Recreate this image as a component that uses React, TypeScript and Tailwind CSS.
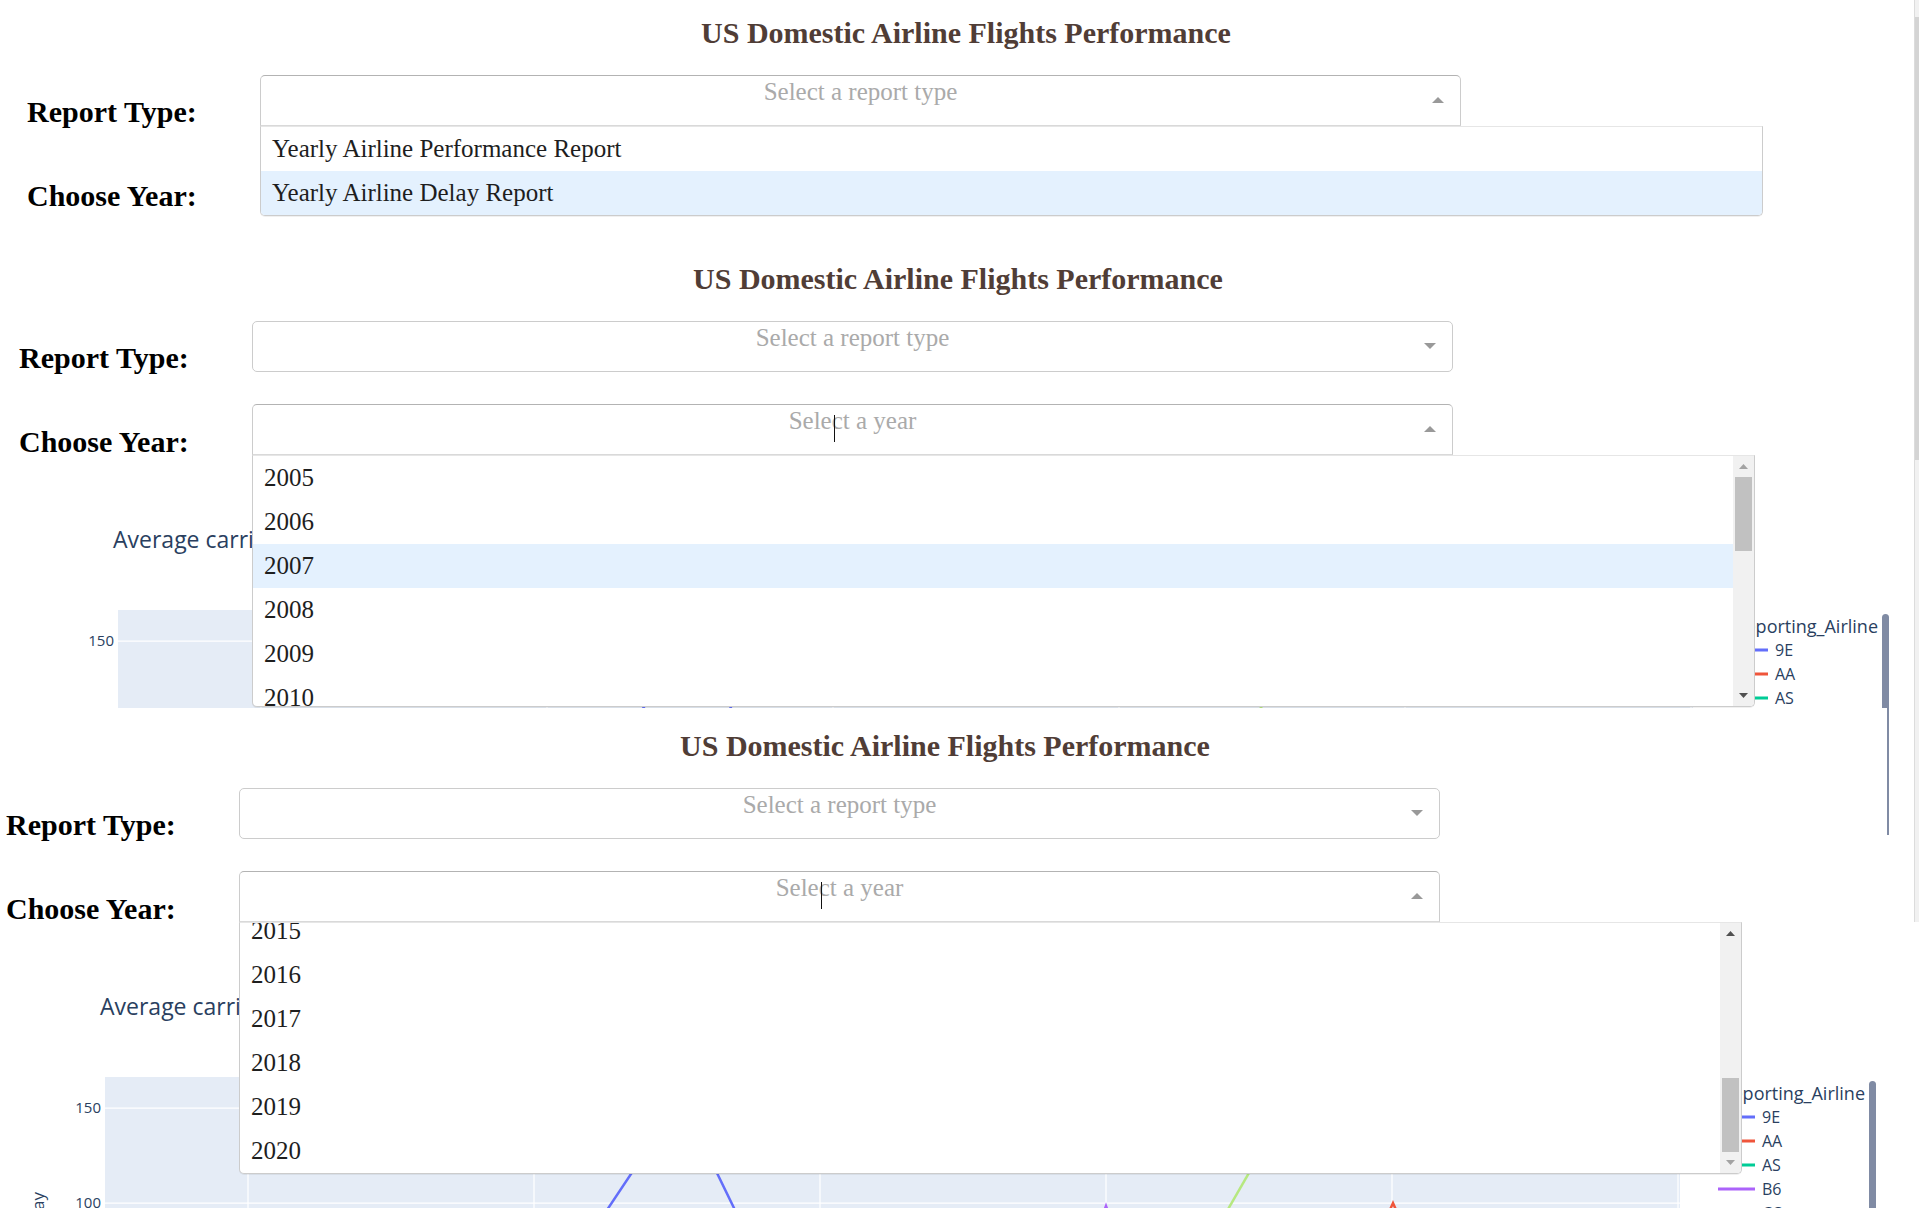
import React from 'react'

type Shift = '' | '-ml-[8px]' | '-ml-[21px]'

const reportOptions = ['Yearly Airline Performance Report', 'Yearly Airline Delay Report']
const yearsTop = ['2005', '2006', '2007', '2008', '2009', '2010']
const yearsBottom = ['2015', '2016', '2017', '2018', '2019', '2020']

const legendItems = [
  { name: '9E', color: '#636efa', y: 164 },
  { name: 'AA', color: '#EF553B', y: 188 },
  { name: 'AS', color: '#00cc96', y: 212 },
  { name: 'B6', color: '#ab63fa', y: 236 },
  { name: 'CO', color: '#FFA15A', y: 260 },
]

const gridX = [269, 555, 841, 1127, 1413, 1699]

const Triangle: React.FC<{ up?: boolean; color: string }> = ({ up, color }) => (
  <svg width="9" height="5" viewBox="0 0 9 5">
    <path d={up ? 'M0 5L4.5 0L9 5Z' : 'M0 0H9L4.5 5Z'} fill={color} />
  </svg>
)

const Scrollbar: React.FC<{ atBottom?: boolean }> = ({ atBottom }) => (
  <div className="flex h-[250px] w-[21px] shrink-0 flex-col bg-[#f1f1f1]">
    <div className="flex h-[21px] items-center justify-center">
      <Triangle up color={atBottom ? '#505050' : '#a3a3a3'} />
    </div>
    <div className="flex flex-1 flex-col px-[2px]">
      <div className={atBottom ? 'mt-auto h-[74px] bg-[#c1c1c1]' : 'h-[74px] bg-[#c1c1c1]'} />
    </div>
    <div className="flex h-[21px] items-center justify-center">
      <Triangle color={atBottom ? '#a3a3a3' : '#505050'} />
    </div>
  </div>
)

const ReportMenu: React.FC = () => (
  <div className="absolute left-0 top-full z-10 w-[1503px] overflow-hidden rounded-b-[5px] border border-[#ccc] border-t-[#e6e6e6] bg-white shadow-[0_1px_0_rgba(0,0,0,0.06)]">
    {reportOptions.map((opt, i) => (
      <div
        key={opt}
        className={
          i === 1
            ? 'flex h-[44px] items-center bg-[#e4f1fe] px-[11px] text-[25px] text-[#1e1e1e]'
            : 'flex h-[44px] items-center px-[11px] text-[25px] text-[#1e1e1e]'
        }
      >
        {opt}
      </div>
    ))}
  </div>
)

const YearMenu: React.FC<{ atBottom?: boolean }> = ({ atBottom }) => {
  const years = atBottom ? yearsBottom : yearsTop
  return (
    <div className="absolute left-0 top-full z-10 flex w-[1503px] overflow-hidden rounded-b-[5px] border border-[#ccc] border-t-[#e6e6e6] bg-white shadow-[0_1px_0_rgba(0,0,0,0.06)]">
      <div className={atBottom ? 'flex h-[250px] flex-1 flex-col justify-end overflow-hidden' : 'flex h-[250px] flex-1 flex-col overflow-hidden'}>
        {years.map((y) => (
          <div
            key={y}
            className={
              !atBottom && y === '2007'
                ? 'flex h-[44px] shrink-0 items-center bg-[#e4f1fe] px-[11px] text-[25px] text-[#1e1e1e]'
                : 'flex h-[44px] shrink-0 items-center px-[11px] text-[25px] text-[#1e1e1e]'
            }
          >
            {y}
          </div>
        ))}
      </div>
      <Scrollbar atBottom={atBottom} />
    </div>
  )
}

const Dropdown: React.FC<{
  placeholder: string
  open?: boolean
  caret?: boolean
  menu?: React.ReactNode
}> = ({ placeholder, open, caret, menu }) => (
  <div className="relative h-[51px] w-[1201px] shrink-0">
    <div
      className={
        open
          ? 'grid h-[51px] rounded-t-[5px] border border-[#ccc] border-t-[#b3b3b3] border-b-[#d9d9d9] bg-white'
          : 'grid h-[51px] rounded-[5px] border border-[#ccc] bg-white'
      }
    >
      <span className="col-start-1 row-start-1 self-start justify-self-center text-[25px] leading-[31px] text-[#aaa]">
        {placeholder}
      </span>
      {caret && (
        <span className="col-start-1 row-start-1 ml-[581px] mt-[10px] h-[27px] w-px self-start justify-self-start bg-[#111]" />
      )}
      <svg
        className="col-start-1 row-start-1 mr-[16px] mt-[21px] self-start justify-self-end"
        width="12"
        height="6"
        viewBox="0 0 12 6"
      >
        <path d={open ? 'M0 6L6 0L12 6Z' : 'M0 0H12L6 6Z'} fill="#999" />
      </svg>
    </div>
    {open && menu}
  </div>
)

// plotly figure sitting under the open menus
const Chart: React.FC = () => (
  <svg className="mt-[31px] block" width="1932" height="270" fontFamily="'Open Sans', sans-serif">
    <text x="121" y="62" fontSize="23" fill="#2a3f5f">
      Average carrier delay time (minutes) by airline
    </text>
    <rect x="126" y="124" width="1575" height="200" fill="#E5ECF6" />
    {[155, 250].map((y) => (
      <line key={y} x1="126" x2="1701" y1={y} y2={y} stroke="#fff" strokeWidth="1.25" />
    ))}
    {gridX.map((x) => (
      <line key={x} x1={x} x2={x} y1="124" y2="324" stroke="#fff" strokeWidth="1.25" />
    ))}
    <text x="122" y="160" fontSize="15" fill="#2a3f5f" textAnchor="end">150</text>
    <text x="122" y="255" fontSize="15" fill="#2a3f5f" textAnchor="end">100</text>
    <text x="65" y="239" fontSize="17" fill="#2a3f5f" textAnchor="end" transform="rotate(-90 65 239)">
      CarrierDelay
    </text>
    <polyline points="596,305 702,146 772,290" fill="none" stroke="#636efa" strokeWidth="2.5" />
    <polyline points="1320,133 1210,324" fill="none" stroke="#b6e880" strokeWidth="2.5" />
    <polyline points="1392,300 1414,250 1436,300" fill="none" stroke="#EF553B" strokeWidth="2.5" />
    <polyline points="1110,300 1127,253 1144,300" fill="none" stroke="#ab63fa" strokeWidth="2.5" />
    <text x="1886" y="147" fontSize="18" fill="#2a3f5f" textAnchor="end">Reporting_Airline</text>
    {legendItems.map((item) => (
      <g key={item.name}>
        <line x1="1739" x2="1776" y1={item.y} y2={item.y} stroke={item.color} strokeWidth="3" />
        <text x="1783" y={item.y + 6} fontSize="16" fill="#2a3f5f">{item.name}</text>
      </g>
    ))}
    <rect x="1890" y="128" width="7" height="200" rx="3.5" fill="#808BA4" />
  </svg>
)

const Panel: React.FC<{ shift: Shift; open: 'report' | 'year'; atBottom?: boolean }> = ({ shift, open, atBottom }) => (
  <div className={`w-[1932px] shrink-0 ${shift}`}>
    <h1 className="pt-[16px] text-center text-[30px] font-bold leading-[34px] text-[#503D36]">
      US Domestic Airline Flights Performance
    </h1>

    <div className="mt-[25px] flex h-[51px] items-start">
      <div className="h-[51px] w-[260px] shrink-0 pl-[27px] pt-[20px] text-[30px] font-bold leading-[34px] text-black">
        Report Type:
      </div>
      <Dropdown placeholder="Select a report type" open={open === 'report'} menu={<ReportMenu />} />
    </div>

    <div className="mt-[32px] flex h-[51px] items-start">
      <div className="h-[51px] w-[260px] shrink-0 pl-[27px] pt-[21px] text-[30px] font-bold leading-[34px] text-black">
        Choose Year:
      </div>
      <Dropdown
        placeholder="Select a year"
        open={open === 'year'}
        caret={open === 'year'}
        menu={<YearMenu atBottom={atBottom} />}
      />
    </div>

    <Chart />
  </div>
)

export default function App() {
  return (
    <div className="relative h-[1208px] w-[1919px] overflow-hidden bg-white font-['Liberation_Serif','Times_New_Roman',serif]">
      <section className="h-[246px] overflow-hidden">
        <Panel shift="" open="report" />
      </section>
      <section className="h-[462px] overflow-hidden">
        <Panel shift="-ml-[8px]" open="year" />
      </section>
      <section className="h-[500px] overflow-hidden pt-[5px]">
        <Panel shift="-ml-[21px]" open="year" atBottom />
      </section>

      {/* page scrollbar edge and the stray legend rail between captures */}
      <div className="absolute right-0 top-0 flex h-[922px] w-[5px] flex-col border-l border-[#dcdcdc] bg-[#f1f1f1]">
        <div className="mt-[17px] h-[443px] bg-[#d4d4d4]" />
      </div>
      <div className="absolute left-[1887px] top-[708px] h-[127px] w-[2px] bg-[#808BA4]" />
    </div>
  )
}
